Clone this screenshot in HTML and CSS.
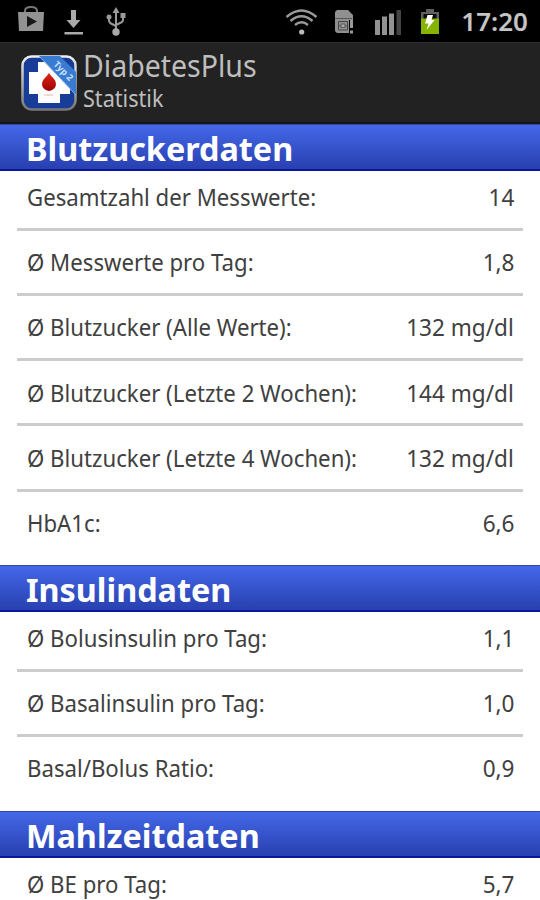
FILE: index.html
```
<!DOCTYPE html>
<html lang="de">
<head>
  <meta charset="UTF-8">
  <meta name="viewport" content="width=device-width, initial-scale=1.0">
  <title>DiabetesPlus - Statistik</title>
  <link rel="stylesheet" href="styles.css">
</head>
<body>
<div class="status">
  <svg class="status-left" width="130" height="42" viewBox="0 0 130 42">
    <path d="M25 12V11Q25 7 31 7T37 11V12" fill="none" stroke="#777" stroke-width="2"/>
    <path d="M18 12H44L43 31H19Z" fill="#929292"/>
    <path d="M27 16V27L37 21.500Z" fill="#171717"/>
    <path d="M71 10H76V20H80.500L73.500 28L66.500 20H71ZM64.500 32H83V34.500H64.500Z" fill="#aaa"/>
    <g fill="none" stroke="#999" stroke-width="2">
      <path d="M116 11V32M109 18V20Q109 23 112 24L116 26M123 16V20Q123 22 120 23L116 25"/>
    </g>
    <path d="M116 7L119.500 13H112.500ZM120.500 13H125.500V18H120.500Z" fill="#999"/>
    <circle cx="109" cy="17" r="2.500" fill="#999"/>
    <circle cx="116" cy="32" r="3.700" fill="#aaa"/>
  </svg>
  <svg class="status-right" width="160" height="42" viewBox="284 0 160 42">
    <g fill="none" stroke="#999" stroke-width="2.400">
      <path d="M286.500 17Q301.500 4 316.500 17M290.500 21Q301.500 11.500 312.500 21M295 25Q301.500 19.500 308 25"/>
    </g>
    <circle cx="301.700" cy="32" r="2.600" fill="#bbb"/>
    <path d="M337 10H348L353 15V20H349V33H337L335 31V12Z" fill="#909090"/>
    <path d="M335 18.500H352" stroke="#555"/>
    <path d="M338.500 21.500H347.500V30H338.500Z" fill="none" stroke="#444"/>
    <path d="M341 24H345V27.500H341ZM338 26H341M345 26H348" fill="#aaa" stroke="#444" stroke-width=".7"/>
    <path d="M350 20H353V28H350ZM350 30.500H353V33.500H350Z" fill="#999"/>
    <path d="M375 20H380V35H375ZM382 16.500H387V35H382ZM389 13.500H394V35H389Z" fill="#929292"/>
    <path d="M396.500 10H401V35H396.500Z" fill="#444"/>
    <path d="M426 9H434V12H439V34H421V12H426Z" fill="#606060"/>
    <path d="M423.500 14H436.500V19H423.500Z" fill="#090909"/>
    <path d="M421 18.500H439V34H421Z" fill="#85b300"/>
    <path d="M427.500 15H433L431.500 20H434.500L426.500 30L428.500 23.500H425Z" fill="#fff"/>
  </svg>
  <span class="clock">17:20</span>
</div>
<div class="titlebar">
  <svg width="56" height="56" viewBox="0 0 56 56">
    <defs>
      <linearGradient id="frame" x1="0" y1="0" x2="0" y2="1">
        <stop offset="0" stop-color="#eee"/>
        <stop offset="1" stop-color="#777"/>
      </linearGradient>
      <linearGradient id="drop" x1="0" y1="0" x2="0" y2="1">
        <stop offset="0" stop-color="#e02418"/>
        <stop offset="1" stop-color="#9d0505"/>
      </linearGradient>
      <clipPath id="inner"><rect x="1" y="1" width="54" height="54" rx="9"/></clipPath>
    </defs>
    <rect x="1.500" y="1.500" width="53" height="53" rx="9" fill="#173d98" stroke="url(#frame)" stroke-width="2.500"/>
    <path d="M17 7H39V17H49V39H39V48H17V39H8V17H17Z" fill="#fff"/>
    <path d="M28 18Q30 21 33 24A7 7 0 1 1 23 24Q26 21 28 18Z" fill="url(#drop)"/>
    <ellipse cx="27.500" cy="40" rx="5" ry="1" fill="#f3d6cf"/>
    <g clip-path="url(#inner)">
      <path d="M17 0H38L56 18V41Z" fill="#397bd1"/>
      <path d="M17 0L56 41" stroke="#8eb9ed"/>
      <text class="ribbon" transform="translate(32 10) rotate(45)">Typ 2</text>
    </g>
  </svg>
  <div class="titles">
    <div class="app"><span>DiabetesPlus</span></div>
    <div class="screen"><span>Statistik</span></div>
  </div>
</div>

<h2><span>Blutzuckerdaten</span></h2>
<div class="list">
  <div class="row"><span>Gesamtzahl der Messwerte:</span><b>14</b></div>
  <div class="row"><span>Ø Messwerte pro Tag:</span><b>1,8</b></div>
  <div class="row"><span>Ø Blutzucker (Alle Werte):</span><b>132 mg/dl</b></div>
  <div class="row"><span>Ø Blutzucker (Letzte 2 Wochen):</span><b>144 mg/dl</b></div>
  <div class="row"><span>Ø Blutzucker (Letzte 4 Wochen):</span><b>132 mg/dl</b></div>
  <div class="row"><span>HbA1c:</span><b>6,6</b></div>
</div>

<h2><span>Insulindaten</span></h2>
<div class="list insulin">
  <div class="row"><span>Ø Bolusinsulin pro Tag:</span><b>1,1</b></div>
  <div class="row"><span>Ø Basalinsulin pro Tag:</span><b>1,0</b></div>
  <div class="row"><span>Basal/Bolus Ratio:</span><b>0,9</b></div>
</div>

<h2><span>Mahlzeitdaten</span></h2>
<div class="list meals">
  <div class="row"><span>Ø BE pro Tag:</span><b>5,7</b></div>
</div>
</body>
</html>
```
FILE: styles.css
```
html,body{
  margin: 0;
  height: 900px;
  overflow: hidden;
  background: #fff;
  font-family: "Noto Sans", "Open Sans", sans-serif;
}
.status{
  display: flex;
  align-items: center;
  height: 42px;
  background: #000;
}
.status-right{
  margin-left: auto;
}
.clock{
  width: 84px;
  margin-right: 12px;
  text-align: right;
  font-size: 26px;
  font-weight: 600;
  line-height: 44px;
  color: #c4c4c4;
}
.titlebar{
  display: flex;
  align-items: center;
  box-sizing: border-box;
  height: 82px;
  padding-left: 21px;
  gap: 6px;
  background: #222;
  border-top: 1px solid #303030;
  border-bottom: 2px solid #151515;
  color: #bebebe;
}
.titles{
  padding-bottom: 4px;
}
.titles span, h2 span, .row span, .row b{
  display: inline-block;
  transform-origin: left center;
}
.app{
  font-size: 30px;
  line-height: 36px;
}
.app span{
  transform: scaleX(.95);
}
.screen{
  font-size: 23px;
  line-height: 29px;
}
.screen span{
  transform: scaleX(.94);
}
.ribbon{
  font-size: 9px;
  font-weight: bold;
  fill: #c8e0fa;
}
h2{
  box-sizing: border-box;
  height: 47px;
  margin: 0;
  padding-left: 26px;
  font-size: 33px;
  line-height: 47px;
  color: #fff;
  background: linear-gradient(#4468e8, #2840b0);
  border-top: 1px solid #3048a0;
  border-bottom: 2px solid #0a169c;
}
h2 span{
  transform: scaleX(.98);
}
.list{
  padding: 0 17px;
  height: 394px;
}
.insulin{
  height: 199px;
}
.meals{
  height: 42px;
}
.row{
  display: flex;
  justify-content: space-between;
  box-sizing: border-box;
  height: 65.3px;
  padding: 15.5px 9px 0 9.5px;
  border-bottom: 3px solid #ccc;
  font-size: 23px;
  line-height: 32px;
  color: #404040;
}
.row:first-child{
  height: 59.5px;
  padding-top: 10px;
}
.row:last-child{
  border-bottom: 0;
}
.meals .row{
  height: 42px;
}
.row span{
  transform: scaleX(.965);
}
.row b{
  font-weight: normal;
  transform: scaleX(.98);
  transform-origin: right center;
}
```
